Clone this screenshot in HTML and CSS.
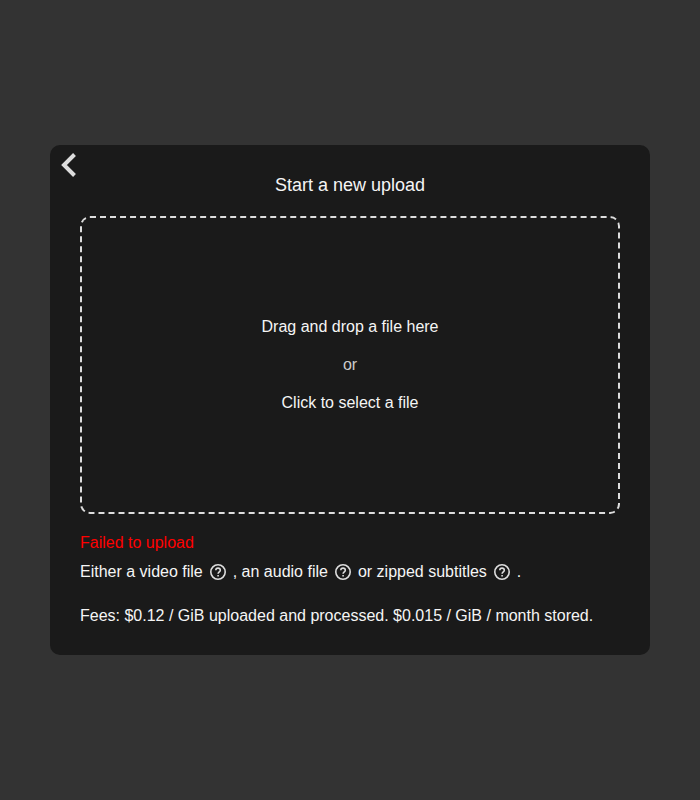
FILE: index.html
```html
<!DOCTYPE html>
<html lang="en">
<head>
<meta charset="utf-8">
<title>Upload</title>
<link rel="stylesheet" href="styles.css">
</head>
<body>
<main class="card">
  <button class="back" aria-label="Back"><svg viewBox="0 0 24 24" width="24" height="24"><path d="M18.500 1.500 8 12l10.500 10.500" fill="none" stroke="currentColor" stroke-width="4"/></svg></button>
  <h1 class="title">Start a new upload</h1>
  <div class="dropzone">
    <div>Drag and drop a file here</div>
    <div class="or">or</div>
    <div>Click to select a file</div>
  </div>
  <div class="error">Failed to upload</div>
  <div class="formats">Either a video file <svg class="help" viewBox="0 0 16 16"><use href="#help"/></svg> , an audio file <svg class="help" viewBox="0 0 16 16"><use href="#help"/></svg> or zipped subtitles <svg class="help" viewBox="0 0 16 16"><use href="#help"/></svg> .</div>
  <div class="fees">Fees: $0.12 / GiB uploaded and processed. $0.015 / GiB / month stored.</div>
</main>
<svg class="defs"><g id="help" fill="none" stroke="currentColor" stroke-width="1.600"><circle cx="8" cy="8" r="7.200"/><path d="M5.800 6.300C5.800 4.900 6.700 4.100 8 4.100s2.300.8 2.300 2.100c0 1.600-2.200 1.700-2.200 3.600"/><path d="M8.100 10.900v1.700"/></g></svg>
</body>
</html>
```
FILE: styles.css
```css
* { box-sizing: border-box; }
body {
  margin: 0;
  height: 100vh;
  display: flex;
  align-items: center;
  justify-content: center;
  background: #333;
  color: #f5f5f5;
  font: 16px/18px "Liberation Sans", Arial, sans-serif;
}
.card {
  position: relative;
  width: 600px;
  height: 510px;
  padding: 30px;
  border-radius: 10px;
  background: #1a1a1a;
}
.back {
  position: absolute;
  left: 6px;
  top: 8px;
  padding: 0;
  border: 0;
  background: none;
  color: #ddd;
}
.back svg { display: block; }
.title {
  margin: 0 0 21px;
  font-size: 18px;
  line-height: 20px;
  font-weight: 400;
  text-align: center;
}
.dropzone {
  height: 298px;
  border: 2px dashed #ddd;
  border-radius: 10px;
  display: flex;
  flex-direction: column;
  align-items: center;
  justify-content: center;
  gap: 20px;
}
.or { color: #ccc; }
.error { margin-top: 20px; color: #f00; }
.formats { margin-top: 8px; height: 24px; line-height: 24px; }
.help {
  width: 16px;
  height: 16px;
  margin: 0 2.560px;
  vertical-align: -3px;
  color: #ddd;
}
.fees { margin-top: 23px; }
.defs { position: absolute; width: 0; height: 0; }
```
